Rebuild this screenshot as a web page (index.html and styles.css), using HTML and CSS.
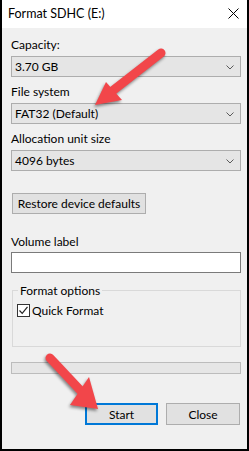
FILE: index.html
```html
<!DOCTYPE html>
<html lang="en">
<head>
  <meta charset="UTF-8" />
  <title>Format SDHC (E:)</title>
  <link rel="stylesheet" href="styles.css">
</head>
<body>
  <div class="dialog">
    <div class="titlebar">
      <span class="title">Format SDHC (E:)</span>
      <svg class="close-x" width="11" height="11" viewBox="0 0 11 11">
        <path d="M0.5 0.5 L10.5 10.5 M10.5 0.5 L0.5 10.5" stroke="#000" stroke-width="1" fill="none"/>
      </svg>
    </div>

    <div class="content">
      <div class="label">Capacity:</div>
      <div class="select">
        <span>3.70 GB</span>
        <svg class="chev" width="8" height="5" viewBox="0 0 8 5"><path d="M0.5 0.5 L4 4 L7.5 0.5" stroke="#5a5a5a" fill="none"/></svg>
      </div>

      <div class="label gap">File system</div>
      <div class="select">
        <span>FAT32 (Default)</span>
        <svg class="chev" width="8" height="5" viewBox="0 0 8 5"><path d="M0.5 0.5 L4 4 L7.5 0.5" stroke="#5a5a5a" fill="none"/></svg>
      </div>

      <div class="label gap">Allocation unit size</div>
      <div class="select">
        <span>4096 bytes</span>
        <svg class="chev" width="8" height="5" viewBox="0 0 8 5"><path d="M0.5 0.5 L4 4 L7.5 0.5" stroke="#5a5a5a" fill="none"/></svg>
      </div>

      <button class="btn restore">Restore device defaults</button>

      <div class="label vol">Volume label</div>
      <div class="textbox"></div>

      <fieldset class="group">
        <legend>Format options</legend>
        <div class="check-row">
          <span class="checkbox">
            <svg width="11" height="11" viewBox="0 0 11 11"><path d="M1.5 5.5 L4.2 8.3 L9.5 1.8" stroke="#222" stroke-width="1.2" fill="none"/></svg>
          </span>
          <span>Quick Format</span>
        </div>
      </fieldset>

      <div class="progress"></div>

      <div class="actions">
        <button class="btn start">Start</button>
        <button class="btn close">Close</button>
      </div>
    </div>

    <svg class="arrows" width="249" height="451" viewBox="0 0 249 451">
      <g class="arrow">
        <line x1="161" y1="53" x2="111" y2="92" stroke="#f2464a" stroke-width="9" stroke-linecap="round"/>
        <polygon points="95,105 106,82 122,100" fill="#f2464a"/>
      </g>
      <g class="arrow">
        <line x1="50" y1="358" x2="81" y2="391" stroke="#f2464a" stroke-width="9" stroke-linecap="round"/>
        <polygon points="98,409 89,377 70,405" fill="#f2464a"/>
      </g>
    </svg>
  </div>
</body>
</html>
```

FILE: styles.css
```css
body {
  margin: 0;
  padding: 0;
  background: #fff;
  font-family: Lato, "Noto Sans", sans-serif;
  font-size: 12px;
  color: #000;
}
.dialog {
  position: relative;
  width: 249px;
  height: 451px;
  box-sizing: border-box;
  border-left: 2px solid #000;
  border-right: 2px solid #000;
  border-bottom: 2px solid #000;
  background: #f0f0f0;
}
.titlebar {
  height: 28px;
  background: #fff;
  display: flex;
  align-items: center;
  justify-content: space-between;
  padding: 0 6px 2px 6px;
  box-sizing: border-box;
}
.title {
  font-size: 12.5px;
  line-height: 15px;
}
.close-x {
  margin-right: 2px;
}
.content {
  padding: 9px 6px 0 9px;
}
.label {
  line-height: 15px;
  height: 15px;
}
.label.gap {
  margin-top: 7px;
}
.label.vol {
  margin-top: 20px;
}
.select {
  margin-top: 4px;
  height: 21px;
  box-sizing: border-box;
  border: 1px solid #adadad;
  background: #e5e5e5;
  display: flex;
  align-items: center;
  justify-content: space-between;
  padding: 0 6px 0 3px;
  line-height: 15px;
}
.chev {
  margin-top: 1px;
}
.btn {
  font-family: inherit;
  font-size: 12px;
  color: #000;
  background: #e1e1e1;
  border: 1px solid #adadad;
  height: 22px;
  padding: 0;
  line-height: 15px;
  box-sizing: border-box;
}
.restore {
  display: block;
  margin: 22px 0 0 1px;
  width: 134px;
  height: 21px;
}
.textbox {
  margin-top: 3px;
  height: 21px;
  box-sizing: border-box;
  background: #fff;
  border: 1px solid #7a7a7a;
}
.group {
  margin: 10px 0 0 1px;
  border: 1px solid #d9d9d9;
  padding: 5px 4px 28px 4px;
  min-width: 0;
}
.group legend {
  margin-left: 1px;
  padding: 0 2px;
  line-height: 15px;
}
.check-row {
  display: flex;
  align-items: center;
  gap: 2px;
  height: 15px;
  line-height: 15px;
}
.checkbox {
  width: 13px;
  height: 13px;
  box-sizing: border-box;
  border: 1px solid #333;
  background: #fff;
  display: flex;
  align-items: center;
  justify-content: center;
}
.progress {
  margin-top: 15px;
  height: 12px;
  box-sizing: border-box;
  background: #e6e6e6;
  border: 1px solid #bcbcbc;
}
.actions {
  margin-top: 29px;
  display: flex;
  justify-content: flex-end;
  gap: 8px;
  padding-right: 1px;
}
.start {
  width: 73px;
  border: 2px solid #0078d7;
}
.close {
  width: 74px;
}
.arrows {
  position: absolute;
  left: -2px;
  top: 0;
  pointer-events: none;
}
.arrow {
  filter: drop-shadow(-1px 2px 1.5px rgba(0, 0, 0, 0.45));
}
```
